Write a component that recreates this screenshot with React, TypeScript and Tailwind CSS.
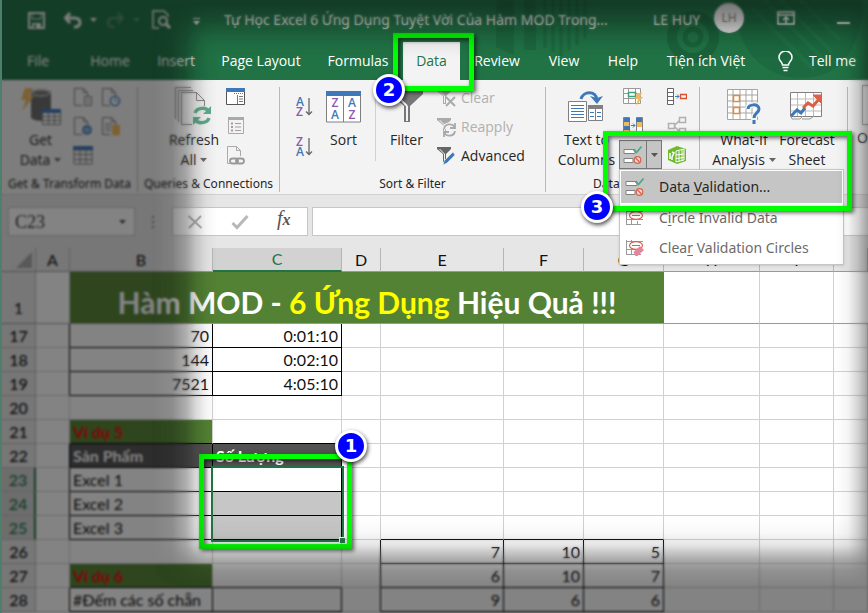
import type { ReactNode } from "react";
import clsx from "clsx";

const UI_FONT = "font-['Open_Sans','Noto_Sans',sans-serif]";
const SHEET_FONT = "font-['Lato','Noto_Sans',sans-serif]";

function Icon({ w, h, children }: { w: number; h: number; children: ReactNode }) {
  return (
    <svg width={w} height={h} viewBox={`0 0 ${w} ${h}`} fill="none" aria-hidden className="shrink-0">
      {children}
    </svg>
  );
}

function Caret({ className }: { className?: string }) {
  return (
    <svg width="7" height="4" viewBox="0 0 7 4" aria-hidden className={clsx("inline-block shrink-0", className)}>
      <path d="M0 0h7L3.5 4z" fill="currentColor" />
    </svg>
  );
}

/* ---------- annotations ---------- */

function Badge({ n, className }: { n: number; className: string }) {
  return (
    <span
      className={clsx(
        "absolute flex size-8 items-center justify-center rounded-full border-[3px] border-white bg-[#0000ff] font-['DejaVu_Sans','Noto_Sans',sans-serif] text-lg font-bold text-white shadow-[1px_2px_4px_rgba(0,0,0,0.7)]",
        className
      )}
    >
      {n}
    </span>
  );
}

function Marker({ n, className, badgeClass }: { n: number; className: string; badgeClass: string }) {
  return (
    <span
      className={clsx(
        "pointer-events-none absolute z-30 border-[5px] border-[#00ff00] shadow-[2px_2px_4px_rgba(0,0,0,0.6),inset_2px_2px_4px_rgba(0,0,0,0.6)]",
        className
      )}
    >
      <Badge n={n} className={badgeClass} />
    </span>
  );
}

/* ---------- title bar ---------- */

function TitlePattern() {
  return (
    <svg className="absolute top-0 right-0 h-full" width="440" height="80" viewBox="428 0 440 80" aria-hidden>
      <path d="M733 0h130c-2 52-25 78-62 78-38 0-66-30-68-78z" fill="#1b633c" opacity=".6" />
      <path d="M752 8l62 62M764 0l62 62M780 0l52 52M800 0l40 40" stroke="#217346" strokeWidth="4" opacity=".7" />
      <g stroke="#1b633c" fill="none">
        <circle cx="693" cy="37" r="21" strokeWidth="10" />
        <circle cx="693" cy="37" r="8" strokeWidth="5" />
      </g>
      <path d="M496 0h18v55l-18-8zM524 0h12v50h-12z" fill="#1d683f" />
      <path d="M545 0v48M553 0v52M561 0v56M569 0v50M577 0v45M585 0v38" stroke="#1d683f" strokeWidth="3" />
    </svg>
  );
}

function TitleBar() {
  return (
    <div className="relative flex h-10 items-center text-[#f0f0f0]">
      <div className="flex w-[222px] shrink-0 items-center pl-[26px]">
        <button aria-label="Save">
          <Icon w={17} h={17}>
            <path d="M1 1h15v15H1z" stroke="currentColor" strokeWidth="2" />
            <path d="M4 1h9v6H4z" stroke="currentColor" />
            <path d="M4 11h9v5H4z" fill="currentColor" />
            <path d="M6 12.500h2V16H6z" fill="#217346" />
          </Icon>
        </button>
        <button aria-label="Undo" className="ml-[18px]">
          <Icon w={19} h={17}>
            <path d="M7 1L2.500 6 7 11M3 6h8c4 0 6 2 6 4.500S15 15 11 15" stroke="currentColor" strokeWidth="3" />
          </Icon>
        </button>
        <button aria-label="Undo history" className="ml-[8px] pb-1"><Caret /></button>
        <button aria-label="Redo" className="ml-[9px] opacity-25">
          <Icon w={19} h={17}>
            <path d="M12 1l4.500 5-4.500 5M16 6H8c-4 0-6 2-6 4.500S4 15 8 15" stroke="currentColor" strokeWidth="2" />
          </Icon>
        </button>
        <button aria-label="Redo history" className="ml-[8px] pb-1 opacity-25"><Caret /></button>
        <button aria-label="Print preview" className="ml-3">
          <Icon w={20} h={20}>
            <path d="M7 18H1V1h11l4 4v2" stroke="currentColor" strokeWidth="1.500" />
            <circle cx="11" cy="11" r="4" stroke="currentColor" strokeWidth="2" />
            <path d="M14 14l4 4" stroke="currentColor" strokeWidth="3" />
          </Icon>
        </button>
        <button aria-label="Customize toolbar" className="ml-[21px] pt-1">
          <Icon w={7} h={8}>
            <path d="M0 .5h7" stroke="currentColor" />
            <path d="M0 3h7L3.500 7z" fill="currentColor" />
          </Icon>
        </button>
      </div>
      <div className="w-[429px] shrink-0 font-['Noto_Sans',sans-serif] text-sm whitespace-nowrap">
        Tự Học Excel 6 Ứng Dụng Tuyệt Vời Của Hàm MOD Trong...
      </div>
      <div className="w-[61px] shrink-0 font-['Noto_Sans',sans-serif] text-sm whitespace-nowrap">LE HUY</div>
      <div className="mb-1 flex size-[30px] shrink-0 items-center justify-center rounded-full bg-[#e8e8e8] text-xs text-[#777]">LH</div>
      <button aria-label="Ribbon display options" className="mb-1 ml-[33px]">
        <Icon w={18} h={14}>
          <path d="M1 1h16v12H1zM1 4h16" stroke="currentColor" strokeWidth="1.500" />
          <path d="M9 12V6M6 9l3-3 3 3" stroke="currentColor" strokeWidth="1.500" />
        </Icon>
      </button>
      <button aria-label="Minimize" className="ml-[42px] h-4 w-[13px] shrink-0 pt-[6px]">
        <span className="block h-[2px] w-full bg-current" />
      </button>
    </div>
  );
}

const tabs = [
  { label: "File", width: "w-[72px]" },
  { label: "Home", width: "w-[72px]" },
  { label: "Insert", width: "w-[60px]" },
  { label: "Page Layout", width: "w-[110px]" },
  { label: "Formulas", width: "w-[84px]" },
  { label: "Data", width: "w-[57px]" },
  { label: "Review", width: "w-[74px]" },
  { label: "View", width: "w-[60px]" },
  { label: "Help", width: "w-[58px]" },
  { label: "Tiện ích Việt", width: "w-[108px]" },
];

function Tabs() {
  return (
    <nav className="relative flex h-10 items-end text-sm text-white">
      {tabs.map((t) => {
        const active = t.label === "Data";
        return (
          <div key={t.label} className={clsx("relative shrink-0", t.width, active && "ml-[3px]")}>
            <button
              className={clsx("h-[38px] w-full whitespace-nowrap", active && "bg-[#f3f3f3] text-[#217346]")}
            >
              {t.label}
            </button>
            {active && (
              <Marker n={2} className="-top-[9px] -left-[10px] h-[58px] w-[81px]" badgeClass="top-[36px] -left-[25px]" />
            )}
          </div>
        );
      })}
      <button className="ml-[18px] flex h-[38px] shrink-0 items-center gap-4 whitespace-nowrap">
        <Icon w={15} h={21}>
          <path
            d="M4.500 14c0-3-3.500-4-3.500-7.500a6.500 6.500 0 0 1 13 0C14 10 10.500 11 10.500 14zM4.500 16.500h6M5.500 19.500h4"
            stroke="currentColor"
            strokeWidth="1.500"
          />
        </Icon>
        Tell me
      </button>
    </nav>
  );
}

/* ---------- ribbon icons ---------- */

const GRAY = "#808080";
const BLUE = "#3e78b8";

function DocIcon({ children }: { children?: ReactNode }) {
  return (
    <Icon w={20} h={20}>
      <path d="M9 18.500H1.500v-17h9l4 4V9M10.500 1.500v4h4" stroke={GRAY} />
      {children}
    </Icon>
  );
}

function TableIcon() {
  return (
    <Icon w={20} h={20}>
      <path d="M1 5h18v14H1zM1 9.500h18M1 14.500h18M7 5v14M13 5v14" stroke={GRAY} />
      <path d="M0 1h20v4H0z" fill={BLUE} />
    </Icon>
  );
}

function GetDataIcon() {
  return (
    <Icon w={42} h={42}>
      <path d="M11 7c0-5 20-5 20 0v24c0 5-20 5-20 0z" fill="#6b6b6b" />
      <ellipse cx="21" cy="7" rx="9" ry="3" fill="#777" stroke="#e5e5e5" />
      <path d="M5 2h8L9 10h5L2 25l4-11H1z" fill="#f0b95d" />
      <path d="M22.500 24.500h18v14h-18z" fill="#f3f3f3" stroke={GRAY} />
      <path d="M23 30.500h17M23 34.500h17M28.500 25v13M34.500 25v13" stroke={GRAY} />
      <path d="M22 23h19v4H22z" fill={BLUE} />
    </Icon>
  );
}

function RefreshIcon() {
  return (
    <Icon w={40} h={42}>
      <path d="M1.500 33V1.500H17M4.500 36V4.500H19M18 38.500H7.500v-32h15l8 8V20M22.500 6.500v8h8" stroke={GRAY} />
      <path d="M21 27c2-6 12-6 14-1M35 32c-2 6-12 6-14 1" stroke="#5faa8a" strokeWidth="3.500" />
      <path d="M37 20v8h-8zM19 39v-8h8z" fill="#5faa8a" />
    </Icon>
  );
}

function SortLetters({ top, bottom }: { top: string; bottom: string }) {
  return (
    <svg width="18" height="22" viewBox="0 0 18 22" aria-hidden className="shrink-0 overflow-visible">
      <text x="0" y="10" fontSize="12" fontFamily="Open Sans" fontWeight="600" fill={top === "A" ? BLUE : "#8c58b0"}>{top}</text>
      <text x="0" y="20" fontSize="12" fontFamily="Open Sans" fontWeight="600" fill={top === "A" ? "#8c58b0" : BLUE}>{bottom}</text>
      <path d="M13 2v17M10 15.500l3 3 3-3" stroke="#666" strokeWidth="1.300" fill="none" />
    </svg>
  );
}

function SortIcon() {
  return (
    <svg width="36" height="32" viewBox="0 0 36 32" aria-hidden>
      <path d="M.5 3h34v28H.5zM17.500 4v27" fill="#fff" stroke={GRAY} />
      <path d="M0 0h35v5H0z" fill={BLUE} />
      <g fontSize="12" fontFamily="Open Sans" fontWeight="600" textAnchor="middle">
        <text x="9" y="16" fill="#8c58b0">Z</text>
        <text x="9" y="28" fill={BLUE}>A</text>
        <text x="26" y="16" fill={BLUE}>A</text>
        <text x="26" y="28" fill="#8c58b0">Z</text>
      </g>
    </svg>
  );
}

function FilterSmall({ color, children }: { color: string; children: ReactNode }) {
  return (
    <Icon w={20} h={20}>
      <path d="M0 1h14v2L9 8v8H6V8L0 3z" fill={color} />
      <path d="M7.500 8v7M2.500 3l5 5" stroke="#f3f3f3" />
      {children}
    </Icon>
  );
}

function TextToColumnsIcon() {
  return (
    <Icon w={38} h={34}>
      <path d="M.5 11.500h18v20H.5z" fill="#fff" stroke={GRAY} />
      <path d="M3 15.500h13M3 18.500h13M3 21.500h13M3 24.500h13M3 27.500h13" stroke={BLUE} />
      <path d="M13 9c2-8 15-9 16 1" stroke={BLUE} strokeWidth="3" />
      <path d="M22 6l7 8 6-8-6 2z" fill={BLUE} />
      <path d="M20.500 16.500h14v14h-14zM27.500 19v12" fill="#fff" stroke={GRAY} />
      <path d="M20 15h15v4H20z" fill={GRAY} />
      <path d="M22 22.500h4M29 22.500h4M22 26.500h4M29 26.500h4" stroke={BLUE} />
    </Icon>
  );
}

function ValidationIcon() {
  return (
    <Icon w={20} h={20}>
      <path d="M1 4.500h11v4H1zM1 13.500h9v4H1z" fill="#fff" stroke={GRAY} />
      <path d="M10.500 4.500l3 3 5-6" stroke="#4fa883" strokeWidth="1.800" />
      <circle cx="14.500" cy="15" r="3.300" fill="#f3d5ce" stroke="#d9614a" strokeWidth="1.200" />
      <path d="M12.500 13l4 4" stroke="#d9614a" strokeWidth="1.200" />
    </Icon>
  );
}

function CircleInvalidIcon({ eraser }: { eraser?: boolean }) {
  return (
    <Icon w={20} h={18}>
      <path d="M1.500 1v15M1 2.500h17M1 15.500h15M6.500 1v14M12.500 12v4M1 10.500h17" stroke="#999" />
      <ellipse cx="11" cy="6.500" rx="6.500" ry="3.800" fill="#fff" stroke="#d9614a" strokeWidth="1.200" />
      <path d="M7 6.500h8" stroke="#d9614a" />
      {eraser && <path d="M8.500 13l6.500-6 4 4-6.500 6h-2z" fill="#e5849a" />}
    </Icon>
  );
}

function WhatIfIcon() {
  return (
    <Icon w={35} h={36}>
      <path
        d="M.5.500h30v30H.5zM.5 6h30M.5 12h30M.5 18h30M.5 24h30M6 .5v30M13 .5v30M19 .5v30M25 .5v30"
        fill="#fff"
        stroke="#a5a5a5"
      />
      <path d="M6.500 6.500h6v6h-6zM6.500 18.500h6v6h-6z" fill="#fff" stroke="#e38b3a" strokeWidth="1.500" />
      <path d="M21 20c0-5 11-6 11 0 0 4-5 4-5 9v6" stroke="#f3f3f3" strokeWidth="6" />
      <path d="M21 20c0-5 11-6 11 0 0 4-5 4-5 9M27 31v4" stroke={BLUE} strokeWidth="3" />
    </Icon>
  );
}

function ForecastIcon() {
  return (
    <Icon w={34} h={32}>
      <path d="M.5 1.500h31v24H.5z" fill="#fff" stroke={GRAY} />
      <path d="M1 8h30M1 14h30M1 20h30M7.500 2v23M15.500 2v23M23.500 2v23" stroke="#bbb" />
      <path d="M1 25l1 3h8l3-3M12 28h8l4-3" stroke="#999" />
      <path d="M1 25l6-6 4 3 4-5" stroke={BLUE} strokeWidth="3" />
      <path d="M13 17l5-5 5 3 7-8" stroke="#d9614a" strokeWidth="3" />
      <path d="M23 4h8v8z" fill="#d9614a" stroke="#d9614a" />
    </Icon>
  );
}

/* ---------- ribbon ---------- */

function Group({ label, width, children }: { label?: string; width: string; children: ReactNode }) {
  return (
    <section className={clsx("flex shrink-0 flex-col", width)}>
      <div className="flex h-[92px] items-start">{children}</div>
      <div className="text-center font-['Noto_Sans',sans-serif] text-xs leading-5 whitespace-nowrap">{label}</div>
    </section>
  );
}

function Divider() {
  return <div className="mt-1 h-[105px] w-px shrink-0 bg-[#b8b8b8]" />;
}

function BigButton({ icon, lines, caret, width }: { icon: ReactNode; lines: string[]; caret?: boolean; width: string }) {
  return (
    <button className={clsx("flex shrink-0 flex-col items-center text-sm leading-5 whitespace-nowrap", width)}>
      <span className="flex h-[45px] items-center pb-[2px]">{icon}</span>
      {lines.map((l, i) => (
        <span key={l}>
          {l}
          {caret && i === lines.length - 1 && <Caret className="mb-[2px] ml-1 text-[#666]" />}
        </span>
      ))}
    </button>
  );
}

function IconButton({ label, children }: { label: string; children: ReactNode }) {
  return (
    <button aria-label={label} className="flex size-[21px] items-center justify-center">
      {children}
    </button>
  );
}

function ValidationMenu() {
  const items = [
    { before: "Data ", key: "V", after: "alidation...", icon: <ValidationIcon /> },
    { before: "C", key: "i", after: "rcle Invalid Data", icon: <CircleInvalidIcon /> },
    { before: "Clea", key: "r", after: " Validation Circles", icon: <CircleInvalidIcon eraser /> },
  ];
  return (
    <div
      role="menu"
      className="absolute top-full -left-px z-20 mt-px w-[225px] border border-[#c6c6c6] bg-white p-px font-['Noto_Sans',sans-serif] shadow-sm"
    >
      {items.map((it, i) => (
        <button
          key={it.key}
          role="menuitem"
          className={clsx(
            "flex w-full items-center gap-[14px] pl-1 text-left text-sm whitespace-nowrap",
            i === 0 ? "h-8 bg-[#c5c5c5] text-[#262626]" : "h-[30px] text-[#6b6b6b]"
          )}
        >
          {it.icon}
          <span>
            {it.before}
            <u className="underline-offset-2">{it.key}</u>
            {it.after}
          </span>
        </button>
      ))}
    </div>
  );
}

function Ribbon() {
  return (
    <div className="flex h-[115px] border-b border-[#d0d0d0] bg-[#f3f3f3] pt-[3px] text-[#262626]">
      <Group label="Get & Transform Data" width="w-[135px]">
        <div className="flex pt-[2px]">
          <BigButton icon={<GetDataIcon />} lines={["Get", "Data"]} caret width="w-[77px]" />
        </div>
        <div className="-ml-[7px] grid grid-cols-2 gap-x-[7px] gap-y-2 pt-[3px]">
          <IconButton label="From text">
            <DocIcon><path d="M11.500 9.500h7v9h-7zM13.500 12.500h3M13.500 15.500h3" fill="#f3f3f3" stroke={GRAY} /></DocIcon>
          </IconButton>
          <IconButton label="Recent sources">
            <DocIcon>
              <circle cx="14" cy="14" r="4.500" fill="#fff" stroke={BLUE} strokeWidth="1.500" />
              <path d="M14 11.500V14h2.500" stroke={BLUE} />
            </DocIcon>
          </IconButton>
          <IconButton label="From web">
            <DocIcon>
              <circle cx="14" cy="14" r="5" fill={BLUE} />
              <path d="M9 14h10M14 9v10M11 10.500c2 2 2 5 0 7M17 10.500c-2 2-2 5 0 7" stroke="#cfe0f2" strokeWidth=".8" />
            </DocIcon>
          </IconButton>
          <IconButton label="Existing connections">
            <DocIcon>
              <path d="M4 8h7M4 11h6M4 14h6" stroke={GRAY} />
              <path d="M11 10c0-2 8-2 8 0v8c0 2-8 2-8 0z" fill="#f0b95d" />
            </DocIcon>
          </IconButton>
          <IconButton label="From table"><TableIcon /></IconButton>
        </div>
      </Group>
      <Divider />
      <Group label="Queries & Connections" width="w-[141px]">
        <div className="flex pt-[2px] pl-[25px]">
          <BigButton icon={<RefreshIcon />} lines={["Refresh", "All"]} caret width="w-[62px]" />
        </div>
        <div className="grid gap-y-2 pt-[3px]">
          <IconButton label="Queries pane">
            <Icon w={20} h={19}>
              <path d="M.5 1.500h18v16H.5z" fill="#fff" stroke="#555" />
              <path d="M11.500 8v9M13 9.500h4M13 12h4M13 14.500h4" stroke="#777" />
              <path d="M0 1h19v4H0z" fill={BLUE} />
              <path d="M8 6.500h9" stroke="#777" strokeDasharray="1 1" />
            </Icon>
          </IconButton>
          <IconButton label="Properties">
            <Icon w={18} h={19}>
              <path d="M1.500 1.500h15v16h-15z" stroke="#aaa" />
              <path d="M1 1h16v3H1z" fill="#aaa" />
              <path d="M8 7.500h6M8 11h6M8 14.500h6" stroke="#a9a" />
              <path d="M4 7.500h2M4 11h2M4 14.500h2" stroke="#a9a" strokeWidth="2" />
            </Icon>
          </IconButton>
          <IconButton label="Edit links">
            <Icon w={20} h={20}>
              <path d="M4 18.500H1.500v-17h9l4 4V11M10.500 1.500v4h4" stroke="#aaa" />
              <rect x="4" y="13.500" width="8" height="5" rx="2.500" stroke="#999" strokeWidth="1.800" />
              <rect x="10" y="13.500" width="8" height="5" rx="2.500" stroke="#999" strokeWidth="1.800" />
            </Icon>
          </IconButton>
        </div>
      </Group>
      <Divider />
      <Group label="Sort & Filter" width="w-[265px]">
        <div className="flex flex-col gap-[18px] pt-[13px] pl-[16px]">
          <button aria-label="Sort A to Z"><SortLetters top="A" bottom="Z" /></button>
          <button aria-label="Sort Z to A"><SortLetters top="Z" bottom="A" /></button>
        </div>
        <div className="pt-[2px]">
          <BigButton icon={<SortIcon />} lines={["Sort"]} width="w-[59px]" />
        </div>
        <div className="ml-[2px] mt-[8px] h-[70px] w-px bg-[#d0d0d0]" />
        <div className="pt-[2px]">
          <BigButton
            icon={
              <Icon w={32} h={32}>
                <path d="M0 0h32v3L19 15v16h-6V15L0 3z" fill="#777" />
                <path d="M16 15v15M8 7l8 8" stroke="#f3f3f3" strokeWidth="2" />
              </Icon>
            }
            lines={["Filter"]}
            width="w-[61px]"
          />
        </div>
        <div className="flex flex-col text-sm whitespace-nowrap">
          <button className="flex h-[29px] items-center gap-1 text-[#b0b0b0]">
            <FilterSmall color="#aaa"><path d="M9 9l9 9M18 9l-9 9" stroke="#aaa" strokeWidth="2" /></FilterSmall>
            Clear
          </button>
          <button className="flex h-[29px] items-center gap-1 text-[#b0b0b0]">
            <FilterSmall color="#aaa">
              <path d="M7 12c1-6 9-6 11-1M18 14c-1 6-9 6-11 1" stroke="#f3f3f3" strokeWidth="4" />
              <path d="M7 12c1-6 9-6 11-1M18 14c-1 6-9 6-11 1M18 6v5h-5M7 20v-5h5" stroke="#aaa" strokeWidth="1.800" />
            </FilterSmall>
            Reapply
          </button>
          <button className="flex h-[29px] items-center gap-1">
            <FilterSmall color="#666"><path d="M6 19l1-4L16 6l2 3-8 8z" fill={BLUE} stroke="#f3f3f3" strokeWidth=".6" /></FilterSmall>
            Advanced
          </button>
        </div>
      </Group>
      <Divider />
      <Group label="Data Tools" width="w-[153px]">
        <div className="flex pt-[2px] pl-[8px]">
          <BigButton icon={<TextToColumnsIcon />} lines={["Text to", "Columns"]} width="w-[65px]" />
        </div>
        <div className="flex flex-col pt-[3px]">
          <div className="flex flex-col gap-2 pl-[3px]">
            <IconButton label="Flash fill">
              <Icon w={20} h={19}>
                <path d="M.5 1.500h17v15H.5zM.5 6.500h17M.5 11.500h17M5.500 1.500v15M12.500 1.500v15" fill="#fff" stroke="#999" />
                <path d="M5.500 5.500h7v4h-7z" fill="#fff" stroke="#43a07a" strokeWidth="1.500" />
                <path d="M14 6h5l-2 4h3l-7 9 2-7h-3z" fill="#f0b95d" />
              </Icon>
            </IconButton>
            <IconButton label="Remove duplicates">
              <Icon w={20} h={19}>
                <path d="M.5 1.500h6v16h-6zM13.500 1.500h6v16h-6z" fill="#f0b95d" stroke={GRAY} />
                <path d="M1 2h6v4H1zM1 10h6v4H1zM13 2h6v4h-6z" fill={BLUE} />
                <path d="M14 11h5v6h-5z" fill="#fff" />
                <path d="M8 9.500h4M10 7.500l2 2-2 2" stroke={BLUE} />
              </Icon>
            </IconButton>
          </div>
          <div className="relative mt-1 flex h-[29px] w-[43px] border border-[#777] bg-[#c5c5c5]">
            <button aria-label="Data validation" className="flex w-[27px] items-center justify-center border-r border-[#777]">
              <ValidationIcon />
            </button>
            <button aria-label="Data validation options" aria-expanded className="flex flex-1 items-center justify-center text-[#555]">
              <Caret />
            </button>
            <ValidationMenu />
            <Marker n={3} className="-top-[10px] -left-[17px] h-[80px] w-[249px]" badgeClass="top-[55px] -left-[27px]" />
          </div>
        </div>
        <div className="flex flex-col gap-2 pt-[3px] pl-1">
          <IconButton label="Consolidate">
            <Icon w={20} h={19}>
              <path d="M.5 1.500h6v16h-6zM.5 5.500h6M.5 9.500h6M.5 13.500h6" fill="#fff" stroke="#666" />
              <path d="M8 9.500h4M10 7.500l2 2-2 2" stroke={BLUE} />
              <path d="M13.500 7.500h6v4h-6z" stroke="#d9512c" strokeWidth="1.300" />
            </Icon>
          </IconButton>
          <IconButton label="Relationships">
            <Icon w={20} h={19}>
              <path d="M1.500 7.500h6v5h-6zM12.500 1.500h6v5h-6zM12.500 12.500h6v5h-6zM8 9l4-4M8 11l4 4" stroke="#b0b0b0" strokeWidth="1.500" />
            </Icon>
          </IconButton>
          <IconButton label="Manage data model">
            <Icon w={20} h={20}>
              <path d="M1 5l9-4 9 3v12l-9 3-9-4z" fill="#6dbb2c" />
              <path d="M9 6l8-2v11l-8 2zM9 10l8-1M9 13.500l8-1M12 5.500v11M15 5v10.500" stroke="#fff" />
              <path d="M3 8v6M5 7l2 1-2 4v3" stroke="#fff" strokeWidth="1.500" />
            </Icon>
          </IconButton>
        </div>
      </Group>
      <Divider />
      <Group width="w-[147px]">
        <div className="flex pt-[2px] pl-[8px]">
          <BigButton icon={<WhatIfIcon />} lines={["What-If", "Analysis"]} caret width="w-[72px]" />
          <BigButton icon={<ForecastIcon />} lines={["Forecast", "Sheet"]} width="w-[54px]" />
        </div>
      </Group>
      <Divider />
      <Group width="w-[60px]">
        <div className="flex pt-[2px] pl-[9px]">
          <button className="text-left text-sm leading-5">
            <span className="mb-[3px] ml-[5px] block h-[40px] w-9 border border-[#999] bg-[#f7f7f7]" />
            Outline
          </button>
        </div>
      </Group>
    </div>
  );
}

/* ---------- formula bar ---------- */

function FormulaBar() {
  return (
    <div className="flex h-[53px] items-center bg-[#e6e6e6] pl-[6px] font-['Liberation_Serif',serif]">
      <div className="flex h-[29px] w-[127px] shrink-0 items-center border border-[#c6c6c6] bg-white pr-2">
        <input aria-label="Name box" defaultValue="C23" className="w-full min-w-0 bg-transparent pl-[6px] text-lg text-[#444] outline-none" />
        <Caret className="text-[#555]" />
      </div>
      <div className="mr-[18px] ml-[17px] flex shrink-0 flex-col gap-[3px]">
        <i className="size-[2px] bg-[#888]" />
        <i className="size-[2px] bg-[#888]" />
        <i className="size-[2px] bg-[#888]" />
      </div>
      <div className="flex h-[29px] w-[136px] shrink-0 items-center border border-[#c6c6c6] bg-white pl-[14px]">
        <button aria-label="Cancel">
          <Icon w={16} h={16}><path d="M1.500 2l13 12M14 2L2 14" stroke="#b0b0b0" strokeWidth="2" /></Icon>
        </button>
        <button aria-label="Enter" className="ml-[28px]">
          <Icon w={18} h={16}><path d="M1.500 9l4.500 4.500L16.500 2" stroke="#b8b8b8" strokeWidth="3" /></Icon>
        </button>
        <button aria-label="Insert function" className="ml-[28px] pb-1 text-xl leading-5 text-[#555] italic">
          f<span className="text-base font-bold">x</span>
        </button>
      </div>
      <input aria-label="Formula" className="ml-1 h-[29px] min-w-0 flex-1 border border-r-0 border-[#c6c6c6] bg-white px-2 outline-none" />
    </div>
  );
}

/* ---------- sheet ---------- */

const columns = [
  { name: "A", col: "w-[34px]" },
  { name: "B", col: "w-[143px]" },
  { name: "C", col: "w-[129px]" },
  { name: "D", col: "w-[39px]" },
  { name: "E", col: "w-[123px]" },
  { name: "F", col: "w-[80px]" },
  { name: "G", col: "w-[80px]" },
  { name: "H", col: "w-[96px]" },
  { name: "I", col: "w-[74px]" },
  { name: "", col: "" },
];

const rows: { n: number; cells: Record<string, string> }[] = [
  { n: 17, cells: { B: "70", C: "0:01:10" } },
  { n: 18, cells: { B: "144", C: "0:02:10" } },
  { n: 19, cells: { B: "7521", C: "4:05:10" } },
  { n: 20, cells: {} },
  { n: 21, cells: { B: "Ví dụ 5" } },
  { n: 22, cells: { B: "Sản Phẩm", C: "Số Lượng" } },
  { n: 23, cells: { B: "Excel 1" } },
  { n: 24, cells: { B: "Excel 2" } },
  { n: 25, cells: { B: "Excel 3" } },
  { n: 26, cells: { E: "7", F: "10", G: "5" } },
  { n: 27, cells: { B: "Ví dụ 6", E: "6", F: "10", G: "7" } },
  { n: 28, cells: { B: "#Đếm các số chẵn", E: "9", F: "6", G: "6" } },
];

const GRID_RIGHT = "border-r-[#d0d0d0]";
const GRID_BOTTOM = "border-b-[#d0d0d0]";

// cells that carry a black outline on all four sides
function boxed(n: number, c: string) {
  if (c === "B" || c === "C") return (n >= 17 && n <= 19) || (n >= 22 && n <= 25) || n === 28;
  if (c === "E" || c === "F" || c === "G") return n >= 26;
  return false;
}

function cellClass(n: number, c: string, i: number) {
  const next = columns[i + 1]?.name ?? "";
  const right = boxed(n, c) || boxed(n, next);
  const bottom = boxed(n, c) || boxed(n + 1, c);
  const heading = n === 21 || n === 27;
  return clsx(
    "relative h-6 border-r border-b px-[3px] whitespace-nowrap",
    right ? "border-r-black" : GRID_RIGHT,
    bottom ? "border-b-black" : GRID_BOTTOM,
    c === "B" && heading && "bg-[#548235] font-bold text-[#ff0000]",
    (c === "B" || c === "C") && n === 22 && "bg-[#525252] font-bold text-white",
    c === "C" && (n === 24 || n === 25) && "bg-[#c6c6c6]",
    n < 20 || c > "D" ? "text-right" : "text-left"
  );
}

function Sheet() {
  return (
    <table className={clsx("w-full table-fixed border-separate border-spacing-0 bg-white text-base leading-5 text-[#111]", SHEET_FONT)}>
      <colgroup>
        <col className="w-[34px]" />
        {columns.map((c) => (
          <col key={c.name} className={c.col} />
        ))}
      </colgroup>
      <thead>
        <tr className="bg-[#e6e6e6]">
          <th className="h-6 border-r border-b border-r-[#b5b5b5] border-b-[#999] p-0">
            <svg width="16" height="16" viewBox="0 0 16 16" className="mr-[3px] ml-auto" aria-hidden>
              <path d="M16 0v16H0z" fill="#aaa" />
            </svg>
          </th>
          {columns.map((c) => (
            <th
              key={c.name}
              className={clsx(
                "h-6 border-r border-b border-r-[#b5b5b5] p-0 font-normal",
                c.name === "C" ? "border-b-2 border-b-[#217346] bg-[#d2d2d2] text-[#217346]" : "border-b-[#999]"
              )}
            >
              {c.name}
            </th>
          ))}
        </tr>
      </thead>
      <tbody>
        <tr>
          <th className="h-[52px] border-r border-b border-r-[#b5b5b5] border-b-[#999] bg-[#e6e6e6] p-0 pb-[5px] align-bottom font-normal">1</th>
          <td className="border-r border-b border-r-[#d0d0d0] border-b-[#999]" />
          <td
            colSpan={6}
            className="border-b border-b-[#999] bg-[#548235] p-0 pt-2 text-center text-3xl leading-10 font-bold whitespace-nowrap text-white"
          >
            Hàm MOD - <span className="text-[#ffff00]">6 Ứng Dụng</span> Hiệu Quả !!!
          </td>
          <td className="border-r border-b border-r-[#d0d0d0] border-b-[#999]" />
          <td className="border-r border-b border-r-[#d0d0d0] border-b-[#999]" />
          <td className="border-b border-b-[#999]" />
        </tr>
        {rows.map((r) => {
          const selected = r.n >= 23 && r.n <= 25;
          return (
            <tr key={r.n}>
              <th
                className={clsx(
                  "h-6 border-b border-b-[#bdbdbd] p-0 font-medium",
                  selected ? "border-r-2 border-r-[#217346] bg-[#d2d2d2] text-[#217346]" : "border-r border-r-[#b5b5b5] bg-[#e6e6e6]"
                )}
              >
                {r.n}
              </th>
              {columns.map((c, i) => (
                <td key={c.name} className={clsx(cellClass(r.n, c.name, i), "py-0")}>
                  {r.cells[c.name]}
                  {r.n === 23 && c.name === "C" && (
                    <>
                      <span className="pointer-events-none absolute -top-[2px] -left-[2px] z-10 h-[76px] w-[133px] border-2 border-[#217346]">
                        <i className="absolute -right-[3px] -bottom-[3px] size-[6px] border-t border-l border-white bg-[#217346]" />
                      </span>
                      <Marker n={1} className="-top-[14px] -left-[14px] h-[95px] w-[153px]" badgeClass="-top-[29px] left-[131px]" />
                    </>
                  )}
                </td>
              ))}
            </tr>
          );
        })}
      </tbody>
    </table>
  );
}

// dims and softens everything outside the focused part of the window
function Vignette() {
  return (
    <div className="pointer-events-none absolute inset-0 z-40 bg-[#070707]/50 backdrop-blur-[1px] [mask-image:linear-gradient(to_right,black_150px,rgba(0,0,0,0.92)_170px,rgba(0,0,0,0.65)_184px,rgba(0,0,0,0.3)_194px,rgba(0,0,0,0.08)_204px,transparent_215px),linear-gradient(to_bottom,black_4px,rgba(0,0,0,0.72)_20px,rgba(0,0,0,0.3)_35px,rgba(0,0,0,0.08)_46px,transparent_58px),linear-gradient(to_top,black_26px,rgba(0,0,0,0.87)_43px,rgba(0,0,0,0.66)_54px,rgba(0,0,0,0.2)_68px,rgba(0,0,0,0.05)_80px,transparent_95px),linear-gradient(to_left,rgba(0,0,0,0.75),rgba(0,0,0,0.35)_10px,rgba(0,0,0,0.08)_20px,transparent_32px)]" />
  );
}

export default function App() {
  return (
    <div className={clsx("relative min-h-screen overflow-hidden border-l-2 border-[#4d7f6c] bg-white", UI_FONT)}>
      <header className="relative bg-[#217346]">
        <TitlePattern />
        <TitleBar />
        <Tabs />
      </header>
      <Ribbon />
      <FormulaBar />
      <Sheet />
      <Vignette />
    </div>
  );
}
